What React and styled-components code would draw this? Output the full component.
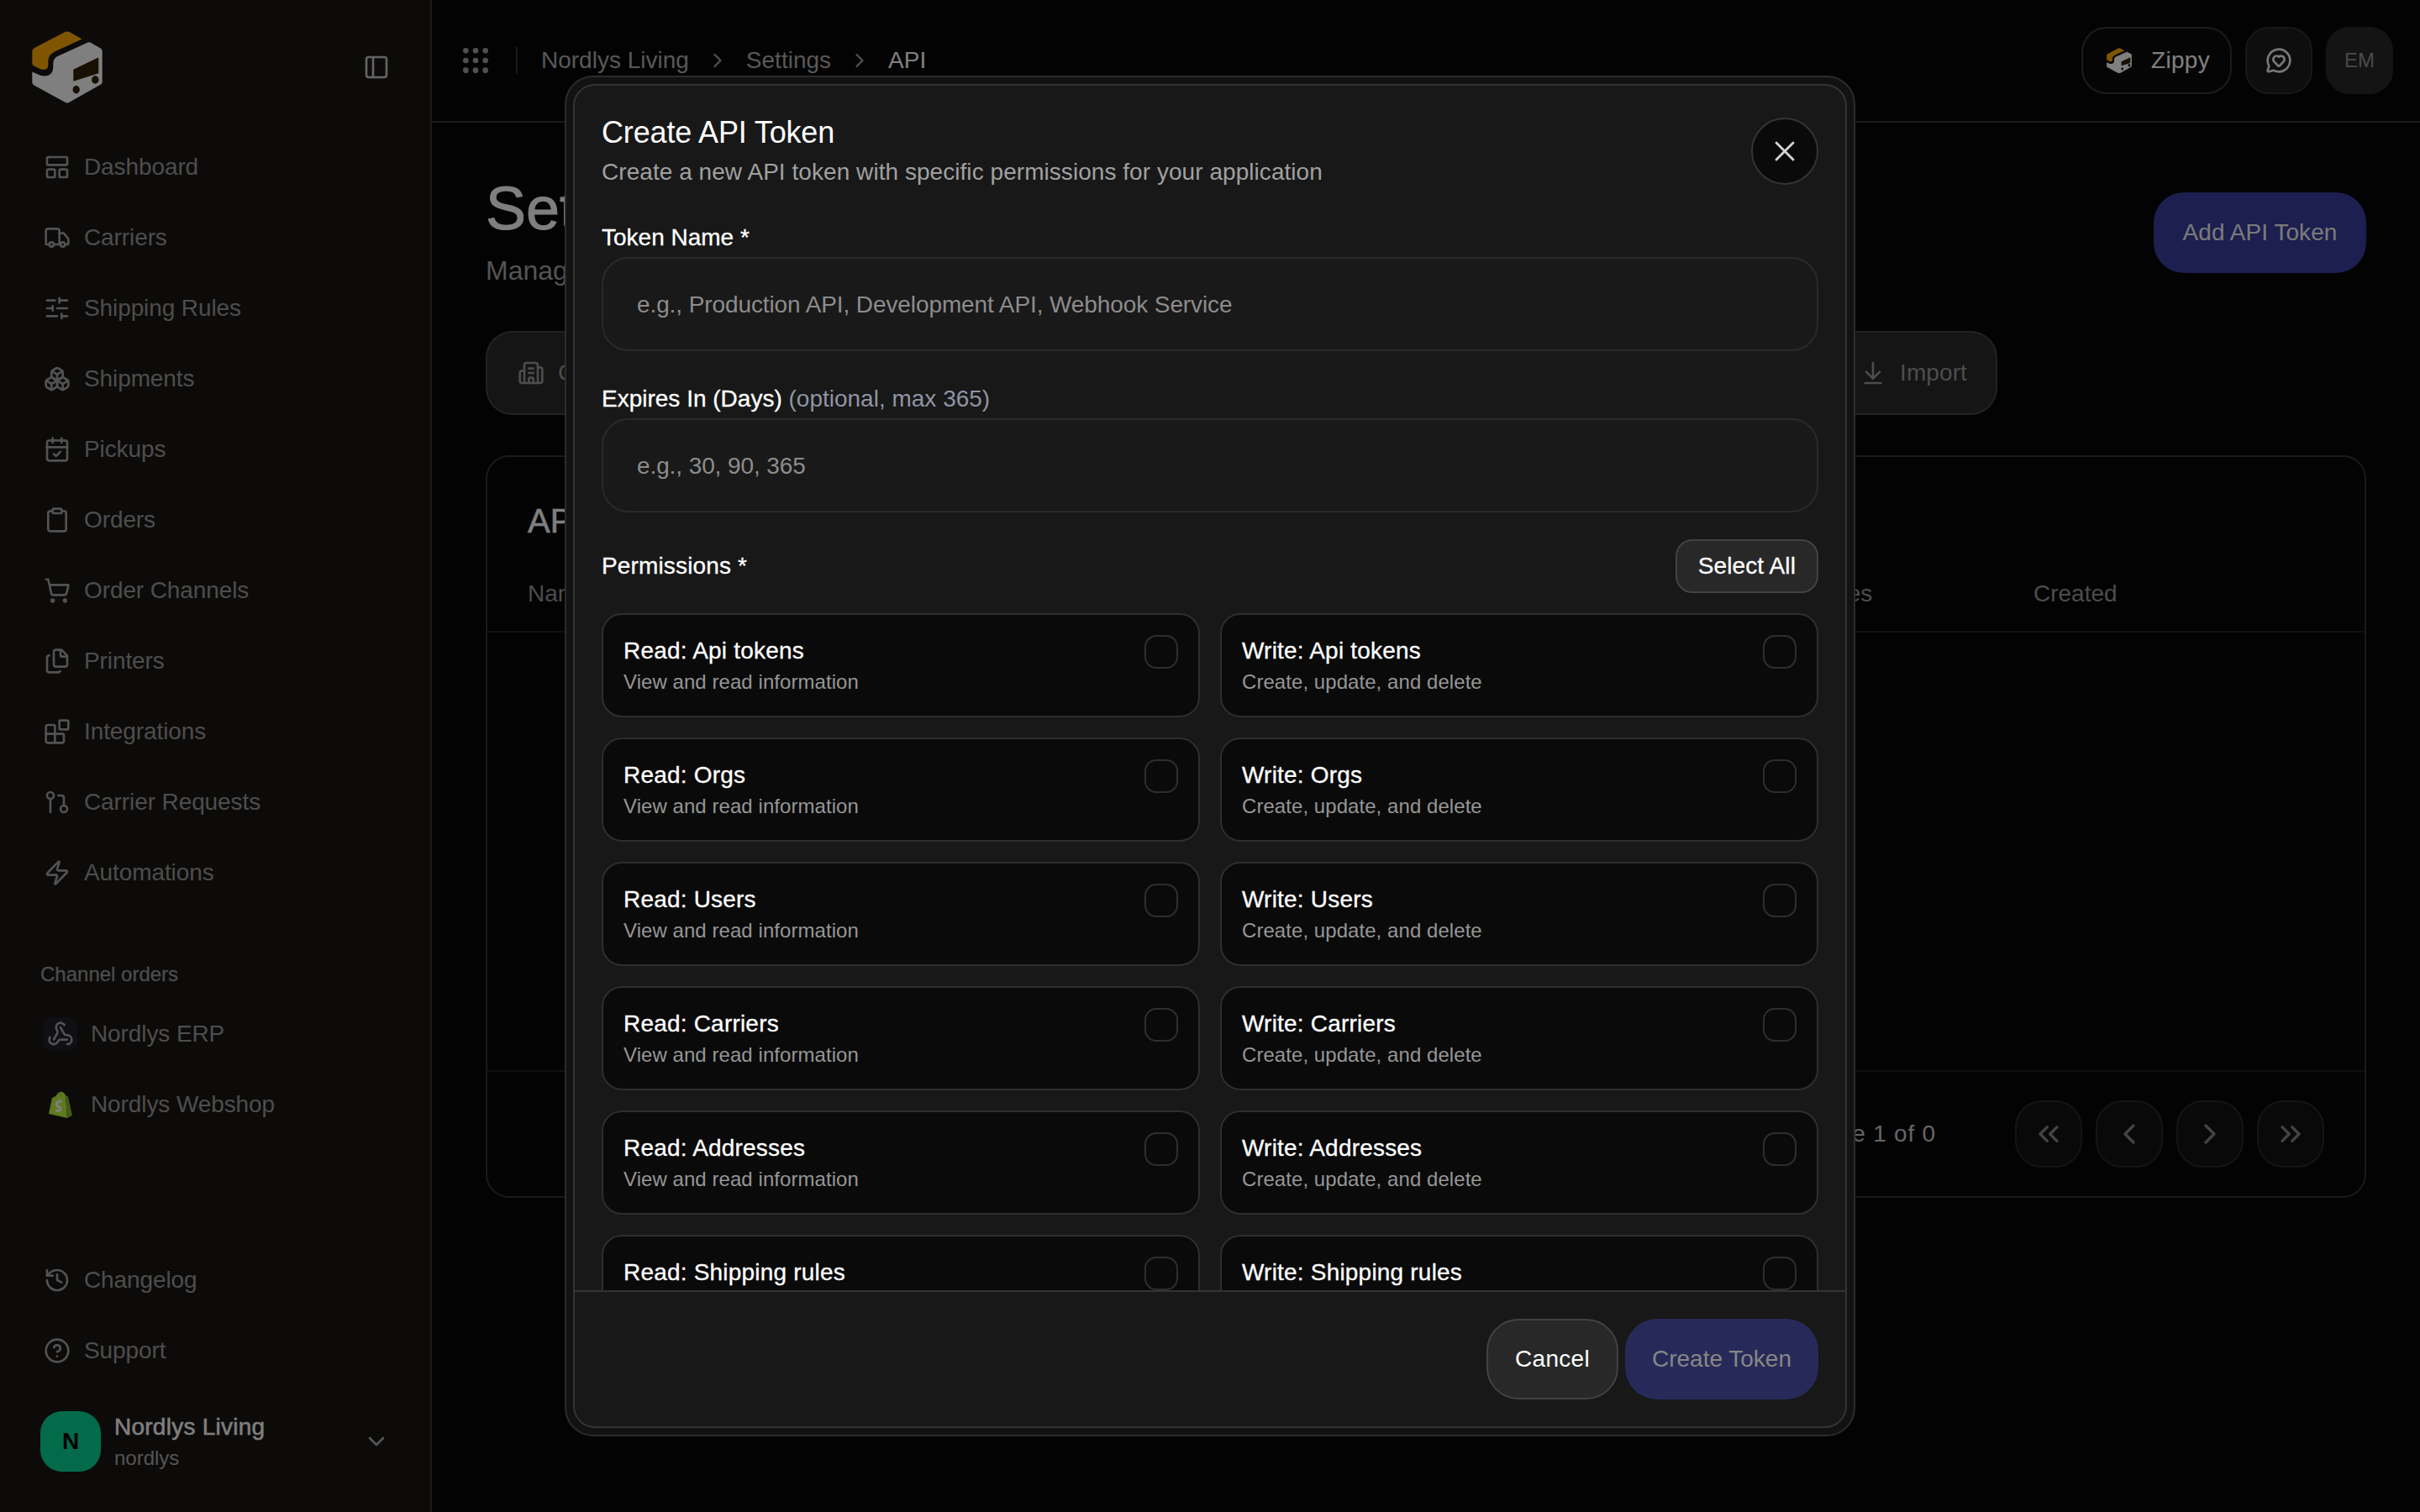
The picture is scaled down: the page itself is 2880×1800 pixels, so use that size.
import React from "react";
import styled, { createGlobalStyle } from "styled-components";
import {
  LayoutPanelTop,
  Truck,
  SlidersHorizontal,
  Boxes,
  CalendarCheck,
  Clipboard,
  ShoppingCart,
  Files,
  Blocks,
  GitPullRequest,
  Zap,
  History,
  CircleHelp,
  PanelLeft,
  ChevronDown,
  ChevronRight,
  ChevronLeft,
  ChevronsLeft,
  ChevronsRight,
  Grip,
  MessageCircleHeart,
  Webhook,
  Building2,
  ArrowDownToLine,
  X,
} from "lucide-react";

const GlobalStyle = createGlobalStyle`
  * { box-sizing: border-box; }
  html, body { margin: 0; padding: 0; background: #060606; }
  body {
    font-family: "Liberation Sans", Arial, sans-serif;
    font-size: 28px;
    color: #fff;
  }
`;

const Shell = styled.div`
  display: flex;
  width: 100vw;
  height: 100vh;
  overflow: hidden;
  background: #060606;
`;

/* sidebar */
const Sidebar = styled.aside`
  flex: 0 0 514px;
  display: flex;
  flex-direction: column;
  background: #181614;
  border-right: 2px solid #383838;
`;

const Brand = styled.div`
  height: 157px;
  padding: 37px 48px 0 38px;
  display: flex;
  justify-content: space-between;
  color: #c8c8c8;
  svg.collapse {
    margin-top: 27px;
  }
`;

const NavRow = styled.div`
  height: 84px;
  padding-left: 52px;
  display: flex;
  align-items: center;
  gap: 16px;
  color: #9a9a9a;
  letter-spacing: -0.1px;
  svg {
    flex: none;
    color: #a4a4a4;
  }
`;

const SideLabel = styled.div`
  margin: 63px 0 13px 48px;
  font-size: 24px;
  line-height: 32px;
  color: #9a9a9a;
  -webkit-text-stroke: 0.3px #9a9a9a;
`;

const ChannelIcon = styled.span`
  width: 40px;
  height: 40px;
  flex: none;
  display: flex;
  align-items: center;
  justify-content: center;
  border-radius: 10px;
  background: ${(p) => p.$bg || "transparent"};
`;

const SideBottom = styled.div`
  margin-top: auto;
`;

const Account = styled.div`
  margin-top: 30px;
  padding: 0 48px 48px 48px;
  display: flex;
  align-items: center;
  gap: 16px;
  color: #aaa;
`;

const Avatar = styled.div`
  width: 72px;
  height: 72px;
  flex: none;
  border-radius: 26px;
  background: #08d694;
  color: #000;
  font-weight: 700;
  font-size: 28px;
  display: flex;
  align-items: center;
  justify-content: center;
`;

const AccountText = styled.div`
  flex: 1;
  display: flex;
  flex-direction: column;
  gap: 2px;
`;

const AccountName = styled.div`
  color: #fff;
  line-height: 36px;
  letter-spacing: 0.25px;
  -webkit-text-stroke: 0.5px #fff;
`;

const AccountSlug = styled.div`
  color: #aaa;
  font-size: 24px;
  line-height: 32px;
  padding-top: 1px;
`;

/* main area */
const Main = styled.main`
  flex: 1;
  min-width: 0;
  display: flex;
  flex-direction: column;
`;

const TopBar = styled.header`
  height: 146px;
  flex: none;
  padding: 0 32px;
  display: flex;
  align-items: center;
  justify-content: space-between;
  border-bottom: 2px solid #343434;
`;

const Crumbs = styled.div`
  display: flex;
  align-items: center;
  gap: 20px;
  color: #b0b0b0;
  svg {
    color: #a0a0a0;
  }
`;

const GripWrap = styled.span`
  display: flex;
  margin-right: 8px;
  color: #a0a0a0;
`;

const Divider = styled.span`
  width: 2px;
  height: 32px;
  margin-right: 8px;
  background: #343434;
`;

const Current = styled.span`
  color: #fff;
`;

const TopActions = styled.div`
  display: flex;
  gap: 16px;
`;

const ZippyButton = styled.div`
  height: 80px;
  padding: 0 24px 0 28px;
  display: flex;
  align-items: center;
  gap: 23px;
  border: 2px solid #383838;
  border-radius: 30px;
  background: #0a0a0a;
  color: #fff;
  letter-spacing: 0.3px;
`;

const SquareButton = styled.div`
  width: 80px;
  height: 80px;
  display: flex;
  align-items: center;
  justify-content: center;
  border: 2px solid ${(p) => p.$border};
  border-radius: 28px;
  background: ${(p) => p.$bg};
  color: ${(p) => p.$color};
  font-size: 24px;
`;

const Page = styled.div`
  flex: 1;
  padding: 62px 64px 0;
  display: flex;
  flex-direction: column;
  gap: 48px;
`;

const PageHead = styled.div`
  display: flex;
  align-items: center;
  justify-content: space-between;
`;

const PageTitle = styled.h1`
  margin: 0 0 10px;
  font-size: 72px;
  line-height: 80px;
  font-weight: 400;
  color: #fff;
  -webkit-text-stroke: 1px #fff;
`;

const PageSub = styled.p`
  margin: 0;
  font-size: 32px;
  line-height: 48px;
  color: #a8a8a8;
`;

const AddButton = styled.div`
  height: 96px;
  width: 253px;
  display: flex;
  align-items: center;
  justify-content: center;
  border-radius: 36px;
  background: #383e9e;
  color: #f4f4f4;
  letter-spacing: 0.05px;
`;

const Tabs = styled.div`
  height: 100px;
  width: 1799px;
  padding: 0 34px 0 36px;
  display: flex;
  align-items: center;
  justify-content: space-between;
  border: 2px solid #444;
  border-radius: 32px;
  background: #2a2a2a;
  color: #999;
`;

const Tab = styled.div`
  display: flex;
  align-items: center;
  gap: 16px;
  letter-spacing: 0.1px;
  svg {
    color: #999;
  }
`;

const TableCard = styled.section`
  height: 884px;
  display: flex;
  flex-direction: column;
  border: 2px solid #343434;
  border-radius: 28px;
`;

const TableTitle = styled.h2`
  margin: 48px 48px 14px;
  font-size: 40px;
  line-height: 56px;
  font-weight: 400;
  color: #fff;
  -webkit-text-stroke: 0.5px #fff;
`;

const TableHead = styled.div`
  height: 91px;
  padding: 0 48px;
  display: grid;
  grid-template-columns: 1507px 285px 1fr;
  align-items: center;
  border-bottom: 2px solid #222;
  color: #999;
`;

const TableBody = styled.div`
  flex: 1;
`;

const TableFoot = styled.div`
  height: 150px;
  padding: 0 48px;
  display: flex;
  align-items: center;
  justify-content: flex-end;
  gap: 94px;
  border-top: 2px solid #222;
  color: #ccc;
  letter-spacing: 0.8px;
`;

const Pager = styled.div`
  display: flex;
  gap: 16px;
`;

const PagerButton = styled.div`
  width: 80px;
  height: 80px;
  display: flex;
  align-items: center;
  justify-content: center;
  border: 2px solid #282828;
  border-radius: 32px;
  background: #121212;
  color: #888;
`;

/* dialog */
const Backdrop = styled.div`
  position: fixed;
  inset: 0;
  display: flex;
  align-items: center;
  justify-content: center;
  background: rgba(0, 0, 0, 0.5);
`;

const Dialog = styled.div`
  width: 1536px;
  height: 1620px;
  padding: 8px;
  border: 2px solid #2c2c2c;
  border-radius: 34px;
  background: #121212;
`;

const Panel = styled.div`
  height: 100%;
  display: flex;
  flex-direction: column;
  overflow: hidden;
  border: 2px solid #333;
  border-radius: 26px;
  background: #181818;
`;

const DialogHead = styled.div`
  flex: none;
  padding: 32px 32px 0;
  display: flex;
  align-items: center;
  justify-content: space-between;
`;

const DialogTitle = styled.h2`
  margin: 0 0 4px;
  font-size: 36px;
  line-height: 48px;
  font-weight: 400;
  letter-spacing: -0.15px;
`;

const DialogSub = styled.p`
  margin: 0 0 2px;
  line-height: 38px;
  color: #a0a0a0;
  letter-spacing: 0.05px;
`;

const CloseButton = styled.button`
  width: 80px;
  height: 80px;
  padding: 0;
  display: flex;
  align-items: center;
  justify-content: center;
  border: 2px solid #343434;
  border-radius: 50%;
  background: #0a0a0a;
  color: #d4d4d4;
`;

const DialogBody = styled.div`
  flex: 1;
  min-height: 0;
  overflow: hidden;
  padding: 36px 32px 0;
`;

const Label = styled.label`
  display: block;
  padding-top: 1px;
  margin-bottom: 3px;
  line-height: 40px;
  -webkit-text-stroke: 0.3px #fff;
`;

const Hint = styled.span`
  color: #8f94a3;
  -webkit-text-stroke: 0;
`;

const Input = styled.input`
  display: block;
  width: 100%;
  height: 112px;
  margin-bottom: 36px;
  padding: 2px 40px 0;
  border: 2px solid #2a2a2a;
  border-radius: 32px;
  background: #191919;
  color: #fff;
  font: inherit;
  letter-spacing: -0.1px;
  outline: none;
  &::placeholder {
    color: #8c8c8c;
    opacity: 1;
  }
`;

const PermsHead = styled.div`
  height: 64px;
  margin: -4px 0 24px;
  display: flex;
  align-items: center;
  justify-content: space-between;
  -webkit-text-stroke: 0.3px #fff;
  letter-spacing: 0.15px;
`;

const SelectAll = styled.button`
  height: 64px;
  padding: 0 25px;
  border: 2px solid #424242;
  border-radius: 20px;
  background: #282828;
  color: #fff;
  font: inherit;
  letter-spacing: 0.1px;
`;

const PermGrid = styled.div`
  display: grid;
  grid-template-columns: 1fr 1fr;
  gap: 24px;
`;

const PermCard = styled.div`
  height: 124px;
  padding: 24px;
  display: flex;
  justify-content: space-between;
  border: 2px solid #2e2e2e;
  border-radius: 24px;
  background: #0a0a0a;
`;

const PermTitle = styled.div`
  margin-top: -1px;
  margin-bottom: 1px;
  line-height: 40px;
  letter-spacing: 0.2px;
  -webkit-text-stroke: 0.3px #fff;
`;

const PermDesc = styled.div`
  font-size: 24px;
  line-height: 32px;
  letter-spacing: 0.06px;
  color: #969696;
`;

const Check = styled.span`
  width: 40px;
  height: 40px;
  flex: none;
  border: 2px solid #2e2e2e;
  border-radius: 14px;
`;

const DialogFoot = styled.div`
  flex: none;
  padding: 32px;
  display: flex;
  justify-content: flex-end;
  gap: 8px;
  border-top: 2px solid #333;
`;

const FootButton = styled.button`
  height: 96px;
  padding: 0 32px;
  border: ${(p) => (p.$primary ? "none" : "2px solid #424242")};
  border-radius: 38px;
  background: ${(p) => (p.$primary ? "#272a58" : "#282828")};
  color: ${(p) => (p.$primary ? "#868686" : "#fff")};
  font: inherit;
  letter-spacing: ${(p) => (p.$primary ? "0" : "0.3px")};
`;

const Logo = ({ size = 84 }) => (
  <svg width={size} height={(size * 86) / 84} viewBox="0 0 84 86" style={{ flex: "none" }}>
    <path
      d="M39 1.2 Q42 -0.4 45 1.2 L59.7 9.4 L27 24.5 Q19.3 28.5 19.3 35.5 L19.3 40 Q19.3 47.5 11 45.6 L2.4 41.4 Q0.3 40.3 0.3 38 L0.3 24.5 Q0.3 21.5 3 20 Z"
      fill="#ffaa00"
    />
    <path
      d="M66 13.7 Q68 12.6 70 13.7 L81.6 20.6 Q83.7 21.8 83.7 24 L83.7 60.4 Q83.7 62.6 81.6 63.8 L44 85 Q42 86 40 85 L2.4 64.6 Q0.3 63.4 0.3 61 L0.3 48.5 L10 52.8 Q25.3 56 25.3 42 L25.3 38 Q25.3 32.5 31 29.7 Z"
      fill="#ffffff"
    />
    <path d="M49.3 45.7 L79.3 31.3 L79.3 50.3 L49.3 59.7 Z" fill="#302000" />
    <ellipse cx="52.7" cy="69.7" rx="4.2" ry="4.7" fill="#302000" />
    <ellipse cx="75.3" cy="58" rx="4.3" ry="4.7" fill="#302000" />
  </svg>
);

const ShopifyBag = () => (
  <svg width="30" height="32" viewBox="0 0 30 32">
    <path d="M1 27 L5 8 Q8 7 10 5 Q13 0 17 1 Q20 2 21 5 L23 32 Z" fill="#bdf23e" />
    <path d="M21 5 L24 6.5 L29 29 L23 32 Z" fill="#84b82e" />
    <path d="M9 8 Q10 3 14 2.5 Q16 3 16.5 7" fill="none" stroke="#84b82e" strokeWidth="1" />
    <path
      d="M17 12.5 Q11.5 11 10.5 15 Q10 17.5 13 19 Q15.8 20.5 14.5 22.6 Q12.5 24.4 9 22.5"
      fill="none"
      stroke="#fff"
      strokeWidth="3"
    />
  </svg>
);

const mainNav = [
  [LayoutPanelTop, "Dashboard"],
  [Truck, "Carriers"],
  [SlidersHorizontal, "Shipping Rules"],
  [Boxes, "Shipments"],
  [CalendarCheck, "Pickups"],
  [Clipboard, "Orders"],
  [ShoppingCart, "Order Channels"],
  [Files, "Printers"],
  [Blocks, "Integrations"],
  [GitPullRequest, "Carrier Requests"],
  [Zap, "Automations"],
];

const resources = ["Api tokens", "Orgs", "Users", "Carriers", "Addresses", "Shipping rules"];

export default function App() {
  return (
    <>
      <GlobalStyle />
      <Shell>
        <Sidebar>
          <Brand>
            <Logo />
            <PanelLeft className="collapse" size={32} strokeWidth={2} />
          </Brand>
          {mainNav.map(([Icon, name]) => (
            <NavRow key={name}>
              <Icon size={32} strokeWidth={2} />
              {name}
            </NavRow>
          ))}
          <SideLabel>Channel orders</SideLabel>
          <NavRow>
            <ChannelIcon $bg="#1e1e28">
              <Webhook size={32} strokeWidth={2} />
            </ChannelIcon>
            Nordlys ERP
          </NavRow>
          <NavRow>
            <ChannelIcon>
              <ShopifyBag />
            </ChannelIcon>
            Nordlys Webshop
          </NavRow>
          <SideBottom>
            <NavRow>
              <History size={32} strokeWidth={2} />
              Changelog
            </NavRow>
            <NavRow>
              <CircleHelp size={32} strokeWidth={2} />
              Support
            </NavRow>
            <Account>
              <Avatar>N</Avatar>
              <AccountText>
                <AccountName>Nordlys Living</AccountName>
                <AccountSlug>nordlys</AccountSlug>
              </AccountText>
              <ChevronDown size={32} />
            </Account>
          </SideBottom>
        </Sidebar>

        <Main>
          <TopBar>
            <Crumbs>
              <GripWrap>
                <Grip size={40} strokeWidth={2} />
              </GripWrap>
              <Divider />
              <span>Nordlys Living</span>
              <ChevronRight size={28} />
              <span>Settings</span>
              <ChevronRight size={28} />
              <Current>API</Current>
            </Crumbs>
            <TopActions>
              <ZippyButton>
                <Logo size={30} />
                Zippy
              </ZippyButton>
              <SquareButton $border="#303030" $bg="#1c1c1c" $color="#f0f0f0">
                <MessageCircleHeart size={32} />
              </SquareButton>
              <SquareButton $border="#282828" $bg="#282828" $color="#949494">
                EM
              </SquareButton>
            </TopActions>
          </TopBar>

          <Page>
            <PageHead>
              <div>
                <PageTitle>Settings</PageTitle>
                <PageSub>Manage your settings</PageSub>
              </div>
              <AddButton>Add API Token</AddButton>
            </PageHead>
            <Tabs>
              <Tab>
                <Building2 size={32} />
                Company
              </Tab>
              <Tab>
                <ArrowDownToLine size={32} />
                Import
              </Tab>
            </Tabs>
            <TableCard>
              <TableTitle>API Tokens</TableTitle>
              <TableHead>
                <span>Name</span>
                <span>Expires</span>
                <span>Created</span>
              </TableHead>
              <TableBody />
              <TableFoot>
                <span>Page 1 of 0</span>
                <Pager>
                  <PagerButton>
                    <ChevronsLeft size={40} />
                  </PagerButton>
                  <PagerButton>
                    <ChevronLeft size={40} />
                  </PagerButton>
                  <PagerButton>
                    <ChevronRight size={40} />
                  </PagerButton>
                  <PagerButton>
                    <ChevronsRight size={40} />
                  </PagerButton>
                </Pager>
              </TableFoot>
            </TableCard>
          </Page>
        </Main>

        <Backdrop>
          <Dialog>
            <Panel>
              <DialogHead>
                <div>
                  <DialogTitle>Create API Token</DialogTitle>
                  <DialogSub>Create a new API token with specific permissions for your application</DialogSub>
                </div>
                <CloseButton>
                  <X size={40} strokeWidth={1.7} />
                </CloseButton>
              </DialogHead>
              <DialogBody>
                <Label>Token Name *</Label>
                <Input placeholder="e.g., Production API, Development API, Webhook Service" />
                <Label>
                  Expires In (Days) <Hint>(optional, max 365)</Hint>
                </Label>
                <Input placeholder="e.g., 30, 90, 365" />
                <PermsHead>
                  Permissions *<SelectAll>Select All</SelectAll>
                </PermsHead>
                <PermGrid>
                  {resources.map((res) => (
                    <React.Fragment key={res}>
                      <PermCard>
                        <div>
                          <PermTitle>Read: {res}</PermTitle>
                          <PermDesc>View and read information</PermDesc>
                        </div>
                        <Check />
                      </PermCard>
                      <PermCard>
                        <div>
                          <PermTitle>Write: {res}</PermTitle>
                          <PermDesc>Create, update, and delete</PermDesc>
                        </div>
                        <Check />
                      </PermCard>
                    </React.Fragment>
                  ))}
                </PermGrid>
              </DialogBody>
              <DialogFoot>
                <FootButton>Cancel</FootButton>
                <FootButton $primary>Create Token</FootButton>
              </DialogFoot>
            </Panel>
          </Dialog>
        </Backdrop>
      </Shell>
    </>
  );
}
